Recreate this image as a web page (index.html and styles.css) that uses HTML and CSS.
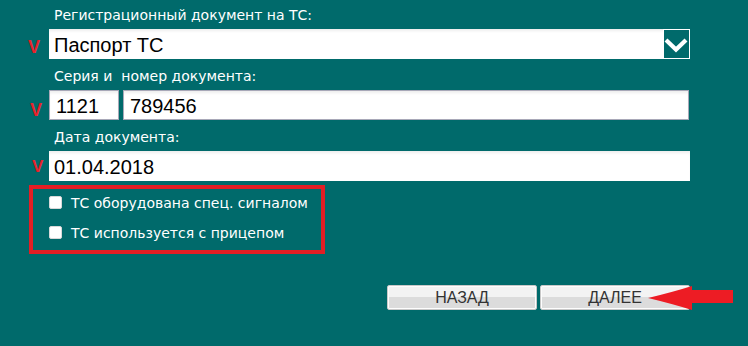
FILE: index.html
```html
<!DOCTYPE html>
<html lang="ru">
<head>
<meta charset="utf-8">
<title>Регистрационный документ</title>
<link rel="stylesheet" href="styles.css">
</head>
<body>
<main class="form">
  <div class="field">
    <label class="label">Регистрационный документ на ТС:</label>
    <div class="row">
      <span class="mark">V</span>
      <div class="select">
        <span class="select-value">Паспорт ТС</span>
        <span class="select-btn">
          <svg width="25" height="28" viewBox="0 0 25 28"><polyline points="2,10 12,19.5 22,10" fill="none" stroke="#fff" stroke-width="4.2" stroke-linejoin="miter"/></svg>
        </span>
      </div>
    </div>
  </div>
  <div class="field">
    <label class="label">Серия и&nbsp; номер документа:</label>
    <div class="row">
      <span class="mark mark--low">V</span>
      <div class="input input--bordered input--series">1121</div>
      <div class="input input--bordered input--number">789456</div>
    </div>
  </div>
  <div class="field">
    <label class="label">Дата документа:</label>
    <div class="row">
      <span class="mark mark--shift">V</span>
      <div class="input input--wide">01.04.2018</div>
    </div>
  </div>
  <div class="options">
    <label class="option"><input type="checkbox" class="check"><span>ТС оборудована спец. сигналом</span></label>
    <label class="option"><input type="checkbox" class="check"><span>ТС используется с прицепом</span></label>
  </div>
  <div class="actions">
    <button class="btn">НАЗАД</button>
    <button class="btn">ДАЛЕЕ</button>
    <svg class="arrow" width="86" height="26" viewBox="0 0 86 26"><path d="M1,13 Q26,7 45,1 L45,5 L86,5 L86,18 L45,18 L45,25 Q26,19 1,13 Z" fill="#ed1c24"/></svg>
  </div>
</main>
</body>
</html>
```
FILE: styles.css
```css
html, body {
  margin: 0;
  padding: 0;
}
body {
  background: #006a6b;
  width: 748px;
  height: 346px;
  overflow: hidden;
}
.form {
  width: 662px;
  padding-left: 28px;
}
.field {
  margin-bottom: 2px;
}
.label {
  display: block;
  box-sizing: border-box;
  height: 29px;
  padding: 6px 0 0 26px;
  font-family: "DejaVu Sans", sans-serif;
  font-size: 14px;
  line-height: 18px;
  color: #fff;
}
.row {
  display: flex;
  height: 30px;
}
.mark {
  width: 21px;
  flex: none;
  box-sizing: border-box;
  padding-top: 9px;
  font-family: "Liberation Sans", Arial, sans-serif;
  font-weight: bold;
  font-size: 18px;
  line-height: 18px;
  color: #e8222a;
}
.mark--low {
  padding: 11px 0 0 2px;
}
.mark--shift {
  padding: 7px 0 0 4px;
  font-size: 17px;
}
.select, .input {
  box-sizing: border-box;
  height: 30px;
  background: #fff;
  box-shadow: inset 0 3px 3px -1px rgba(0, 0, 0, 0.07);
  font-family: "Liberation Sans", Arial, sans-serif;
  font-size: 20px;
  line-height: 26px;
  color: #000;
  padding: 3px 0 0 5px;
}
.select {
  flex: 1;
  display: flex;
  padding-right: 0;
}
.select-value {
  flex: 1;
}
.select-btn {
  box-sizing: border-box;
  width: 27px;
  height: 30px;
  margin-top: -3px;
  border: 1px solid #fff;
  background: #006a6b;
  display: flex;
  align-items: flex-start;
  justify-content: center;
}
.input--bordered {
  border: 1px solid #a8a8b8;
  padding: 2px 0 0 6px;
}
.input--series {
  width: 70px;
  flex: none;
  margin-right: 4px;
}
.input--number {
  flex: 1;
  margin-right: 1px;
}
.input--wide {
  flex: 1;
}
.options {
  box-sizing: border-box;
  width: 296px;
  height: 69px;
  margin: 4px 0 0 1px;
  border: 4px solid #e31e24;
  padding: 0 0 4px 16px;
  display: flex;
  flex-direction: column;
  gap: 3px;
}
.option {
  height: 27px;
  display: flex;
  align-items: center;
  font-family: "DejaVu Sans", sans-serif;
  font-size: 14px;
  color: #fff;
}
.check {
  appearance: none;
  -webkit-appearance: none;
  box-sizing: border-box;
  width: 13px;
  height: 13px;
  margin: 0 9px 0 0;
  background: #fff;
  border: 1px solid #d8d8d8;
  border-radius: 2px;
}
.actions {
  position: relative;
  margin-top: 31px;
  display: flex;
  justify-content: flex-end;
  gap: 3px;
}
.btn {
  box-sizing: border-box;
  width: 150px;
  height: 25px;
  padding: 0;
  border: 1px solid #c9c9c9;
  border-radius: 2px;
  box-shadow: inset 0 0 0 1px #fdfdfd;
  background: linear-gradient(#f3f3f3 0, #f3f3f3 50%, #dcdcdc 50%, #dcdcdc 100%);
  font-family: "Liberation Sans", Arial, sans-serif;
  font-size: 16px;
  color: #333;
  line-height: 23px;
}
.arrow {
  position: absolute;
  right: -43px;
  top: 0;
}
```
